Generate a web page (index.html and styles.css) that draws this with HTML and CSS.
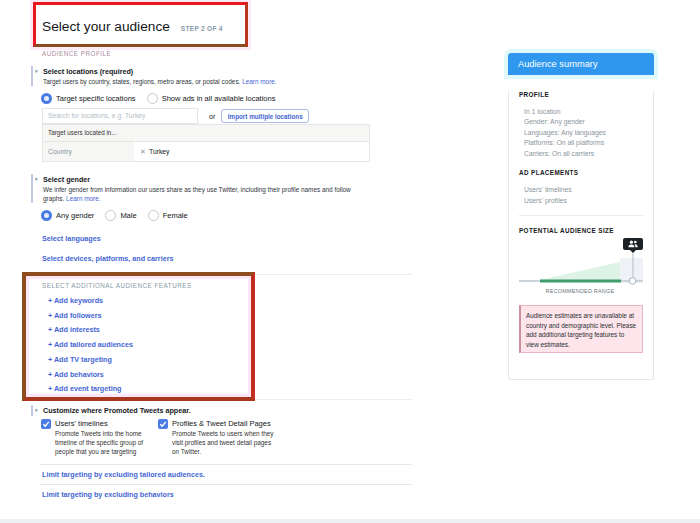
FILE: index.html
```html
<!DOCTYPE html>
<html lang="en">
<head>
<meta charset="UTF-8">
<title>Select your audience</title>
<link rel="stylesheet" href="styles.css">
</head>
<body>

<div class="page">
 <div class="main">

  <!-- Title -->
  <div class="title-box"><h1>Select your audience</h1><span class="step">STEP 2 OF 4</span></div>
  <div class="sec-label">AUDIENCE PROFILE</div>

  <!-- Locations -->
  <div class="group">
   <div class="group-head"><span class="caret">▾</span>Select locations (required)</div>
   <p class="hint">Target users by country, states, regions, metro areas, or postal codes. <a href="#">Learn more.</a></p>
  </div>
  <div class="radios">
   <label class="opt"><span class="radio on"></span>Target specific locations</label>
   <label class="opt"><span class="radio"></span>Show ads in all available locations</label>
  </div>
  <div class="search-row">
   <div class="search">Search for locations, e.g. Turkey</div>
   <span class="or">or</span>
   <button class="import">Import multiple locations</button>
  </div>
  <div class="loc-table">
   <div class="loc-head">Target users located in...</div>
   <div class="loc-row"><div class="loc-type">Country</div><div class="loc-val"><span class="x">✕</span>Turkey</div></div>
  </div>

  <!-- Gender -->
  <div class="group g-gender">
   <div class="group-head"><span class="caret">▾</span>Select gender</div>
   <p class="hint">We infer gender from information our users share as they use Twitter, including their profile names and follow graphs. <a href="#">Learn more.</a></p>
  </div>
  <div class="radios r-gender">
   <label class="opt"><span class="radio on"></span>Any gender</label>
   <label class="opt"><span class="radio"></span>Male</label>
   <label class="opt"><span class="radio"></span>Female</label>
  </div>
  <a class="link-row" href="#">Select languages</a>
  <a class="link-row lr2" href="#">Select devices, platforms, and carriers</a>

  <!-- Additional features -->
  <div class="features">
   <div class="feat-box">
    <div class="feat-label">SELECT ADDITIONAL AUDIENCE FEATURES</div>
    <ul class="feat-list">
     <li><a href="#">+ Add keywords</a></li>
     <li><a href="#">+ Add followers</a></li>
     <li><a href="#">+ Add interests</a></li>
     <li><a href="#">+ Add tailored audiences</a></li>
     <li><a href="#">+ Add TV targeting</a></li>
     <li><a href="#">+ Add behaviors</a></li>
     <li><a href="#">+ Add event targeting</a></li>
    </ul>
   </div>
   <div class="feat-rule"></div>
  </div>

  <!-- Placements -->
  <div class="group g-place">
   <div class="group-head"><span class="caret">▾</span>Customize where Promoted Tweets appear.</div>
  </div>
  <div class="placements">
   <div class="place">
    <span class="cbox"><svg width="10" height="10" viewBox="0 0 10 10"><path d="M2.3 5.2l1.9 1.9 3.6-4.2" fill="none" stroke="#fff" stroke-width="1.4"/></svg></span>
    <div>
     <div class="place-title">Users' timelines</div>
     <div class="place-desc">Promote Tweets into the home timeline of the specific group of people that you are targeting</div>
    </div>
   </div>
   <div class="place p2">
    <span class="cbox"><svg width="10" height="10" viewBox="0 0 10 10"><path d="M2.3 5.2l1.9 1.9 3.6-4.2" fill="none" stroke="#fff" stroke-width="1.4"/></svg></span>
    <div>
     <div class="place-title">Profiles &amp; Tweet Detail Pages</div>
     <div class="place-desc">Promote Tweets to users when they visit profiles and tweet detail pages on Twitter.</div>
    </div>
   </div>
  </div>

  <a class="more-item m1" href="#">Limit targeting by excluding tailored audiences.</a>
  <a class="more-item" href="#">Limit targeting by excluding behaviors</a>
 </div>

 <!-- Summary -->
 <div class="side">
  <div class="side-head">Audience summary</div>
  <div class="side-body">
   <div class="side-title">PROFILE</div>
   <ul class="side-list">
    <li>In 1 location</li>
    <li>Gender: Any gender</li>
    <li>Languages: Any languages</li>
    <li>Platforms: On all platforms</li>
    <li>Carriers: On all carriers</li>
   </ul>
   <div class="side-title t2">AD PLACEMENTS</div>
   <ul class="side-list">
    <li>Users' timelines</li>
    <li>Users' profiles</li>
   </ul>
   <div class="side-rule"></div>
   <div class="side-title t3">POTENTIAL AUDIENCE SIZE</div>
   <svg class="chart" width="124" height="60" viewBox="0 0 124 60">
    <rect x="101" y="21" width="23" height="25" fill="#eef2f7"/>
    <polygon points="21,43 101,25 101,43" fill="#dcf3e6"/>
    <line x1="0" y1="44" x2="124" y2="44" stroke="#ccd4db" stroke-width="2"/>
    <rect x="21" y="42.5" width="81" height="3" fill="#3f9a6c"/>
    <line x1="114" y1="15" x2="114" y2="41" stroke="#b3bdc6"/>
    <circle cx="113.5" cy="44" r="3.3" fill="#fff" stroke="#a9b4be"/>
    <rect x="104" y="1" width="20" height="12" rx="2" fill="#1c2126"/>
    <path d="M111 13h6l-3 3z" fill="#1c2126"/>
    <circle cx="112.4" cy="5.2" r="1.6" fill="#fff"/>
    <path d="M109.4 10.2q0-2.7 3-2.7t3 2.7z" fill="#fff"/>
    <circle cx="116.3" cy="5" r="1.3" fill="#fff"/>
    <path d="M116 7.3q2.6 0 2.7 2.9h-2.3q0-1.8-.9-2.6z" fill="#fff"/>
    <text x="61" y="56" text-anchor="middle" class="range">RECOMMENDED RANGE</text>
   </svg>
   <div class="alert">Audience estimates are unavailable at country and demographic level. Please add additional targeting features to view estimates.</div>
  </div>
 </div>
</div>

<div class="band"></div>

</body>
</html>
```

FILE: styles.css
```css
body{margin:0;font-family:"Liberation Sans",Arial,Helvetica,sans-serif;color:#14171a;background:#fff}
a{color:#4466d4;text-decoration:none}
.page{display:flex;align-items:flex-start;height:499px}
.main{width:390px;margin-left:22px}
/* Title */
.title-box{box-sizing:border-box;width:215px;height:45px;margin:2px 0 0 11px;padding:14px 0 0 6px;border:3px solid #e8181c;border-right-color:#b5371e;border-bottom-color:#8b4a1e;display:flex;align-items:baseline;gap:11px;box-shadow:0 0 0 3px #fdeaf7}
.title-box h1{margin:0;font-size:13.7px;font-weight:400;line-height:16px;color:#14171a}
.step{font-size:6.5px;font-weight:700;color:#8899a6;letter-spacing:.3px}
.sec-label{margin:3px 0 0 20px;font-size:6.3px;line-height:8px;letter-spacing:.5px;color:#a98c99}
/* Groups */
.group{margin:8px 0 0 9px;border-left:2px solid #c0c8e6;padding-left:2px}
.group-head{font-size:7.2px;font-weight:700;line-height:11px}
.caret{display:inline-block;width:8px;font-size:5px;color:#8899a6;vertical-align:1px}
.hint{margin:0 0 0 8px;font-size:6.4px;line-height:9px;color:#2f363d}
.g-gender{margin-top:12px}
.g-gender .hint{width:318px}
.g-place{margin-top:4px}
/* Radios */
.radios{display:flex;align-items:center;height:11px;margin:7px 0 0 19px}
.r-gender{margin-top:7px}
.opt{display:flex;align-items:center;margin-right:11px;font-size:7.5px;color:#14171a}
.radio{box-sizing:border-box;width:11px;height:11px;margin-right:4px;border:1px solid #c2c8ce;border-radius:50%;background:#fff}
.radio.on{border:3.5px solid #4a7be4;background:#e6eefc}
/* Location search */
.search-row{display:flex;align-items:center;height:16px;margin:4px 0 0 20px}
.search{box-sizing:border-box;width:156px;height:16px;padding-left:5px;border:1px solid #e1e5ea;font-size:6.8px;line-height:14px;color:#b5bec7}
.or{margin:0 6px 0 11px;font-size:7px;color:#222}
.import{box-sizing:border-box;width:88px;height:14px;padding:0;border:1px solid #a8bbea;border-radius:3px;background:#fff;color:#4466d4;font:700 6.3px "Liberation Sans",Arial,sans-serif}
.loc-table{box-sizing:border-box;width:328px;margin-left:20px;border:1px solid #e6e6e4}
.loc-head{height:16px;line-height:16px;padding-left:5px;background:#f6f6f4;border-bottom:1px solid #e6e6e4;font-size:6.3px;color:#333}
.loc-row{display:flex;height:19px;line-height:19px;font-size:6.8px}
.loc-type{box-sizing:border-box;width:91px;padding-left:5px;background:#f6f6f4;color:#8a96a0}
.loc-val{padding-left:6px;color:#14171a}
.x{margin-right:3px;font-size:7px;color:#8899a6}
/* Links */
.link-row{display:block;margin:13px 0 0 20px;font-size:7.2px;font-weight:700;line-height:10px}
.link-row.lr2{margin-top:10px}
/* Features */
.features{display:flex;margin-top:8px}
.feat-box{box-sizing:border-box;width:233px;height:129px;padding:6px 0 0 16px;border:4px solid #8d4b1e;border-right-color:#c22f1f;border-bottom-color:#a8381d;box-shadow:inset 0 0 0 3px #fde6f7}
.feat-label{font-size:6.3px;line-height:8px;letter-spacing:.5px;color:#8899a6}
.feat-list{list-style:none;margin:4px 0 0 6px;padding:0}
.feat-list li{font-size:7.2px;font-weight:700;line-height:14.7px}
.feat-rule{flex:1;margin:2px 0 1px;border-top:1px solid #e8eaed;border-bottom:1px solid #eceef0}
/* Placements */
.placements{display:flex;margin:3px 0 0 19px}
.place{display:flex;gap:4px;width:117px}
.place.p2{width:auto}
.cbox{flex:none;width:10px;height:10px;border-radius:2px;background:#4b7be5}
.cbox svg{display:block}
.place-title{font-size:7.5px;line-height:10px;color:#14171a}
.place-desc{width:96px;font-size:6.4px;line-height:9px;color:#333}
.p2 .place-desc{width:104px}
.more-item{display:block;margin-left:18px;padding:5px 0 4px 2px;border-top:1px solid #e6e9ec;font-size:7.2px;font-weight:700;line-height:10px}
.more-item.m1{margin-top:8px}
.band{height:6px;margin-top:20px;background:#eef1f4}
/* Summary */
.side{width:146px;margin:53px 0 0 96px}
.side-head{height:22px;padding-left:10px;line-height:22px;background:#2f98ee;color:#fff;font-size:9.3px;border-radius:3px 3px 0 0;box-shadow:0 0 0 4px #e0fafc}
.side-body{box-sizing:border-box;height:289px;padding:0 10px;border:1px solid #e3e8ec;border-top:0;border-radius:0 0 3px 3px}
.side-title{margin-top:16px;font-size:6.3px;font-weight:700;line-height:8px;letter-spacing:.4px;color:#14171a}
.side-title.t2{margin-top:10px}
.side-title.t3{margin-top:11px}
.side-list{list-style:none;margin:7.75px 0 0;padding:0 0 0 5px;font-size:6.8px;line-height:10.5px;color:#8a959e}
.side-rule{margin-top:9px;border-top:1px solid #e6ebef}
.chart{display:block;margin-top:2px}
.range{font-size:5.5px;fill:#6b7782;letter-spacing:.2px}
.alert{box-sizing:border-box;height:48px;margin-top:8px;padding:5px 4px 0 5px;background:#fde5eb;border:1px solid #e6b5c0;border-left:2px solid #c9919d;font-size:6.4px;line-height:9.5px;color:#292f33}
```
